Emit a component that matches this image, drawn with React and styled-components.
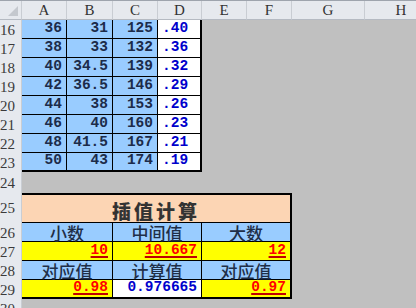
import React from 'react';
import styled, { createGlobalStyle } from 'styled-components';

const GlobalStyle = createGlobalStyle`
  html, body {
    margin: 0;
    padding: 0;
    background: #c0c0c0;
    overflow: hidden;
  }
`;

const Sheet = styled.div`
  display: grid;
  grid-template-columns: 22px 45px 46px 45px 44px 45px 45px 73px 73px;
  grid-template-rows: 19px repeat(8, 19px) 21px 30px repeat(4, 19px) 19px;
  width: 416px;
  height: 308px;
  overflow: hidden;
  background: #c0c0c0;
  border-top: 1px solid #9ea4ad;
  box-sizing: border-box;
`;

const Corner = styled.div`
  background: #e6e9ee;
  border-right: 1px solid #c9cdd3;
  border-bottom: 1px solid #b5bac2;
  position: relative;
  &::after {
    content: '';
    position: absolute;
    right: 3px;
    bottom: 3px;
    border-left: 10px solid transparent;
    border-bottom: 10px solid #c4c8ce;
  }
`;

const ColHeader = styled.div`
  background: #e6e9ee;
  border-right: 1px solid #c9cdd3;
  border-bottom: 1px solid #b5bac2;
  display: flex;
  align-items: center;
  justify-content: center;
  font-family: "Liberation Serif", serif;
  font-size: 15px;
  color: #333;
`;

const RowHeader = styled.div`
  grid-column: 1;
  background: #e6e9ee;
  border-right: 1px solid #c9cdd3;
  display: flex;
  align-items: center;
  font-family: "Liberation Serif", serif;
  font-size: 15px;
  line-height: 15px;
  color: #3a3a3a;
  padding-top: 1px;
  overflow: hidden;
`;

const Cell = styled.div`
  grid-column: span ${(p) => p.$span || 1};
  box-sizing: border-box;
  background: ${(p) => p.$bg || '#99ccff'};
  border-right: ${(p) => (p.$thickRight ? 2 : 1)}px solid #000;
  border-bottom: ${(p) => (p.$thickBottom ? 2 : 1)}px solid #000;
  display: flex;
  align-items: flex-end;
  justify-content: ${(p) => p.$align || 'flex-end'};
  padding: 0 4px 1px 4px;
  font-family: "Liberation Mono", monospace;
  font-weight: bold;
  font-size: 14.5px;
  line-height: 17px;
  color: ${(p) => p.$color || '#1c2b4a'};
  white-space: nowrap;
`;

const Title = styled(Cell)`
  border-top: 2px solid #000;
  justify-content: center;
  align-items: center;
  padding-top: 5px;
  font-family: "Noto Sans CJK SC", sans-serif;
  font-weight: 900;
  font-size: 19px;
  line-height: 22px;
  letter-spacing: 3px;
  color: #333;
`;

const Label = styled(Cell)`
  justify-content: center;
  align-items: center;
  font-family: "Noto Sans CJK SC", sans-serif;
  font-weight: 500;
  font-size: 17px;
  line-height: 17px;
  padding: 1px 0 0 0;
  color: #1f2f48;
`;

const Linked = styled.span`
  color: #ff0000;
  text-decoration: underline;
  text-decoration-thickness: 2px;
  text-underline-offset: 2px;
  text-decoration-color: #c00000;
`;

const data = [
  [16, '36', '31', '125', '.40'],
  [17, '38', '33', '132', '.36'],
  [18, '40', '34.5', '139', '.32'],
  [19, '42', '36.5', '146', '.29'],
  [20, '44', '38', '153', '.26'],
  [21, '46', '40', '160', '.23'],
  [22, '48', '41.5', '167', '.21'],
  [23, '50', '43', '174', '.19'],
];

export default function App() {
  return (
    <>
      <GlobalStyle />
      <Sheet>
        <Corner />
        {['A', 'B', 'C', 'D', 'E', 'F', 'G', 'H'].map((c) => (
          <ColHeader key={c}>{c}</ColHeader>
        ))}

        {data.map(([n, a, b, c, d], i) => {
          const last = i === data.length - 1;
          return (
            <React.Fragment key={n}>
              <RowHeader>{n}</RowHeader>
              <Cell $thickBottom={last}>{a}</Cell>
              <Cell $thickBottom={last}>{b}</Cell>
              <Cell $thickBottom={last}>{c}</Cell>
              <Cell $bg="#ffffff" $color="#0000cc" $align="flex-start" $thickRight $thickBottom={last}>
                {d}
              </Cell>
            </React.Fragment>
          );
        })}

        <RowHeader>24</RowHeader>

        <RowHeader>25</RowHeader>
        <Title $span={6} $bg="#fcd5b4" $thickRight>插值计算</Title>

        <RowHeader>26</RowHeader>
        <Label $span={2}>小数</Label>
        <Label $span={2}>中间值</Label>
        <Label $span={2} $thickRight>大数</Label>

        <RowHeader>27</RowHeader>
        <Cell $span={2} $bg="#ffff00"><Linked>10</Linked></Cell>
        <Cell $span={2} $bg="#ffff00"><Linked>10.667</Linked></Cell>
        <Cell $span={2} $bg="#ffff00" $thickRight><Linked>12</Linked></Cell>

        <RowHeader>28</RowHeader>
        <Label $span={2}>对应值</Label>
        <Label $span={2}>计算值</Label>
        <Label $span={2} $thickRight>对应值</Label>

        <RowHeader>29</RowHeader>
        <Cell $span={2} $bg="#ffff00" $thickBottom><Linked>0.98</Linked></Cell>
        <Cell $span={2} $bg="#ffffff" $color="#0000cc" $thickBottom>0.976665</Cell>
        <Cell $span={2} $bg="#ffff00" $thickRight $thickBottom><Linked>0.97</Linked></Cell>

        <RowHeader>30</RowHeader>
      </Sheet>
    </>
  );
}
